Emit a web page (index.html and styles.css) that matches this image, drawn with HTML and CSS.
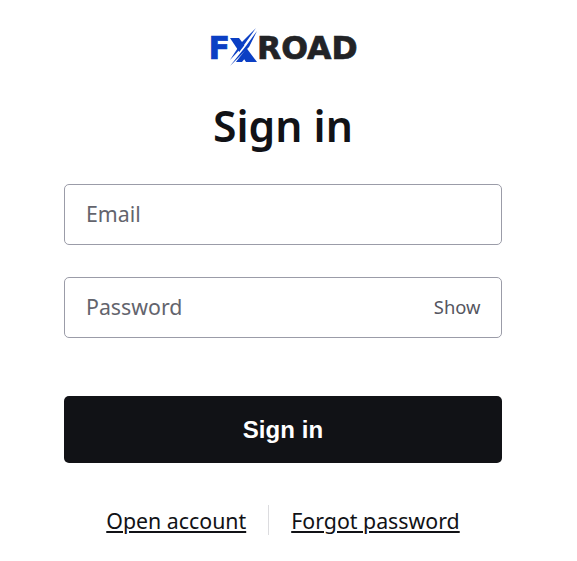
FILE: index.html
```html
<!DOCTYPE html>
<html lang="en">
<head>
<meta charset="utf-8">
<title>Sign in</title>
<link rel="stylesheet" href="styles.css">
</head>
<body>
<main class="page">
  <div class="logo">
    <span class="logo-f">F</span>
    <svg class="logo-x" viewBox="0 0 34 40" width="34" height="40" aria-hidden="true">
      <path class="blue" d="M4 10h9l18 24H20z"/>
      <path class="blue" d="M8 34l8-10 4 5-4 5z"/>
      <path class="gap" d="M32 -1 2 39h4L34 3z"/>
      <path class="blue" d="M30 0 15 15 4 32 18 17z"/>
      <path class="blue" d="M31 3 20 18 4 38 23 19z"/>
    </svg>
    <span class="logo-road">ROAD</span>
  </div>
  <h1 class="title">Sign in</h1>
  <form class="form">
    <label class="field"><input class="input" type="text" placeholder="Email"></label>
    <label class="field"><input class="input" type="password" placeholder="Password"><span class="show">Show</span></label>
    <button class="submit" type="button">Sign in</button>
  </form>
  <nav class="links">
    <a href="#" class="link">Open account</a>
    <span class="divider"></span>
    <a href="#" class="link">Forgot password</a>
  </nav>
</main>
</body>
</html>
```
FILE: styles.css
```css
html, body { margin: 0; padding: 0; background: #fff; }
body { font-family: "Noto Sans", sans-serif; color: #111216; overflow: hidden; }
.page { width: 438px; height: 561px; margin-left: 64px; display: flex; flex-direction: column; }
.logo { height: 40px; margin-top: 28px; display: flex; align-items: center; justify-content: center; font-family: "DejaVu Sans", sans-serif; font-weight: 700; font-size: 31.500px; line-height: 40px; -webkit-text-stroke: 0.7px; }
.logo-f { color: #0b3fc4; margin-right: -4px; }
.logo-x { flex: none; }
.logo-x .blue { fill: #0b3fc4; }
.logo-x .gap { fill: #fff; }
.logo-road { color: #222326; margin-left: -3px; }
.title { margin: 28px 0 0; height: 60px; font-size: 42.670px; line-height: 60px; font-weight: 600; text-align: center; color: #111216; }
.form { display: flex; flex-direction: column; margin-top: 28px; }
.field { position: relative; display: block; margin-bottom: 32px; }
.input { display: block; box-sizing: border-box; width: 100%; height: 61px; padding: 0 80px 2px 21px; border: 1px solid #9b9ca8; border-radius: 5px; background: #fff; font-family: "Noto Sans", sans-serif; font-size: 21.330px; color: #111216; outline: none; }
.input::placeholder { color: #63646d; opacity: 1; }
.show { position: absolute; right: 21.500px; top: 18px; font-size: 18.400px; line-height: 24px; color: #55565f; }
.submit { height: 67px; margin-top: 26px; border: 0; border-radius: 5px; background: #111216; color: #fff; font-family: "Liberation Sans", Arial, sans-serif; font-weight: 700; font-size: 24px; letter-spacing: 0.100px; }
.links { margin-top: 42px; height: 30px; display: flex; align-items: center; justify-content: center; gap: 22px; }
.link { padding-top: 2px; font-size: 21.330px; line-height: 30px; color: #111216; text-decoration: underline; }
.divider { width: 1px; height: 30px; background: #dcdcdf; }
```
